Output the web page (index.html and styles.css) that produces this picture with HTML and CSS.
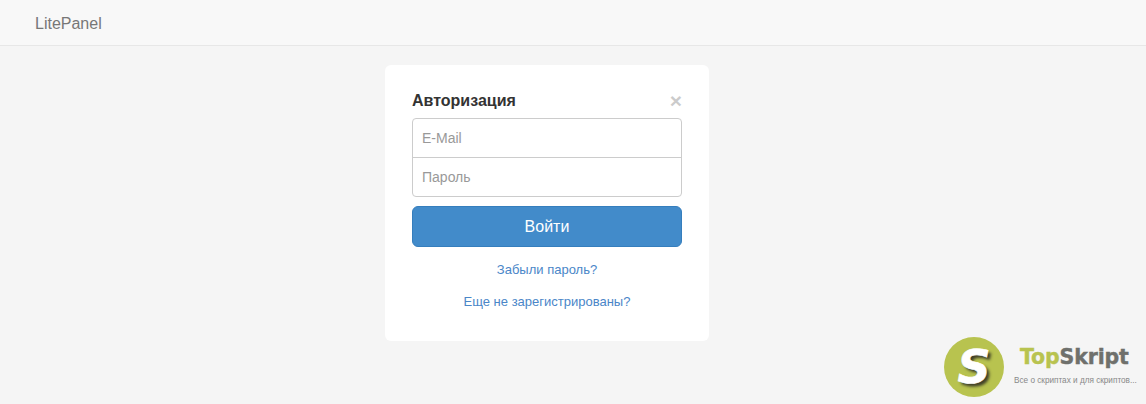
FILE: index.html
```html
<!DOCTYPE html>
<html lang="ru">
<head>
<meta charset="utf-8">
<title>LitePanel</title>
<link rel="stylesheet" href="styles.css">
</head>
<body>
<nav class="navbar"><a class="brand" href="#">LitePanel</a></nav>
<main class="page">
  <form class="card">
    <div class="card-head">
      <h1 class="title">Авторизация</h1>
      <span class="close">×</span>
    </div>
    <div class="fields">
      <div class="field">E-Mail</div>
      <div class="field">Пароль</div>
    </div>
    <button class="submit" type="button">Войти</button>
    <a class="link link-first" href="#">Забыли пароль?</a>
    <a class="link" href="#">Еще не зарегистрированы?</a>
  </form>
</main>
<div class="watermark">
  <div class="badge"><span class="badge-s">S</span></div>
  <div class="wm-text">
    <div class="wm-name"><span class="wm-top">Top</span><span class="wm-skript">Skript</span></div>
    <div class="wm-sub">Все о скриптах и для скриптов...</div>
  </div>
</div>
</body>
</html>
```
FILE: styles.css
```css
* { box-sizing: border-box; }
html, body { height: 100%; }
body {
  margin: 0;
  background: #f5f5f5;
  font-family: "Liberation Sans", Arial, sans-serif;
  font-size: 14px;
  color: #333;
  overflow: hidden;
  position: relative;
}
.navbar {
  height: 46px;
  background: #f8f8f8;
  border-bottom: 1px solid #e7e7e7;
  padding-left: 35px;
  display: flex;
  align-items: center;
}
.brand { font-size: 16px; color: #777; text-decoration: none; position: relative; top: 1px; }
.page { display: flex; justify-content: center; padding-top: 19px; padding-right: 52px; }
.card {
  width: 324px;
  height: 276px;
  background: #fff;
  border-radius: 6px;
  padding: 27px;
  display: flex;
  flex-direction: column;
}
.card-head { display: flex; justify-content: space-between; align-items: flex-start; height: 26px; }
.title { margin: 0; font-size: 16px; font-weight: 700; color: #333; line-height: 17px; }
.close { font-size: 21px; font-weight: 700; line-height: 18px; color: #000; opacity: .2; }
.fields { border: 1px solid #ccc; border-radius: 4px; margin-bottom: 9px; }
.field {
  height: 38px;
  line-height: 38px;
  padding-left: 9px;
  font-size: 14px;
  color: #999;
}
.field + .field { border-top: 1px solid #ccc; height: 39px; }
.submit {
  display: block;
  width: 100%;
  height: 41px;
  background: #428bca;
  border: 1px solid #357ebd;
  border-radius: 6px;
  color: #fff;
  font-family: inherit;
  font-size: 16px;
  padding: 0;
}
.link { display: block; text-align: center; font-size: 13px; line-height: 16px; color: #4a86c8; text-decoration: none; margin-top: 16px; }
.link-first { margin-top: 15px; }
.watermark {
  position: absolute;
  left: 944px;
  top: 337px;
  display: flex;
  align-items: flex-start;
  gap: 10px;
}
.badge {
  width: 60px;
  height: 60px;
  border-radius: 50%;
  background: #b8c34f;
  display: flex;
  align-items: center;
  justify-content: center;
}
.badge-s {
  font-family: "DejaVu Sans", sans-serif;
  font-weight: 700;
  font-style: italic;
  font-size: 46px;
  line-height: 1;
  color: #fff;
  -webkit-text-stroke: .6px #fff;
  text-shadow: 3px 3px 3px #3f3f28;
}
.wm-text { margin-top: 7px; }
.wm-name { font-family: "DejaVu Sans", sans-serif; font-size: 20.5px; font-weight: 700; line-height: 26px; margin-left: 6px; letter-spacing: -.15px; -webkit-text-stroke: .4px currentColor; }
.wm-top { color: #b8c34f; }
.wm-skript { color: #6f706c; }
.wm-sub { font-size: 8.2px; line-height: 12px; margin-top: 5px; color: #888; white-space: nowrap; }
```
